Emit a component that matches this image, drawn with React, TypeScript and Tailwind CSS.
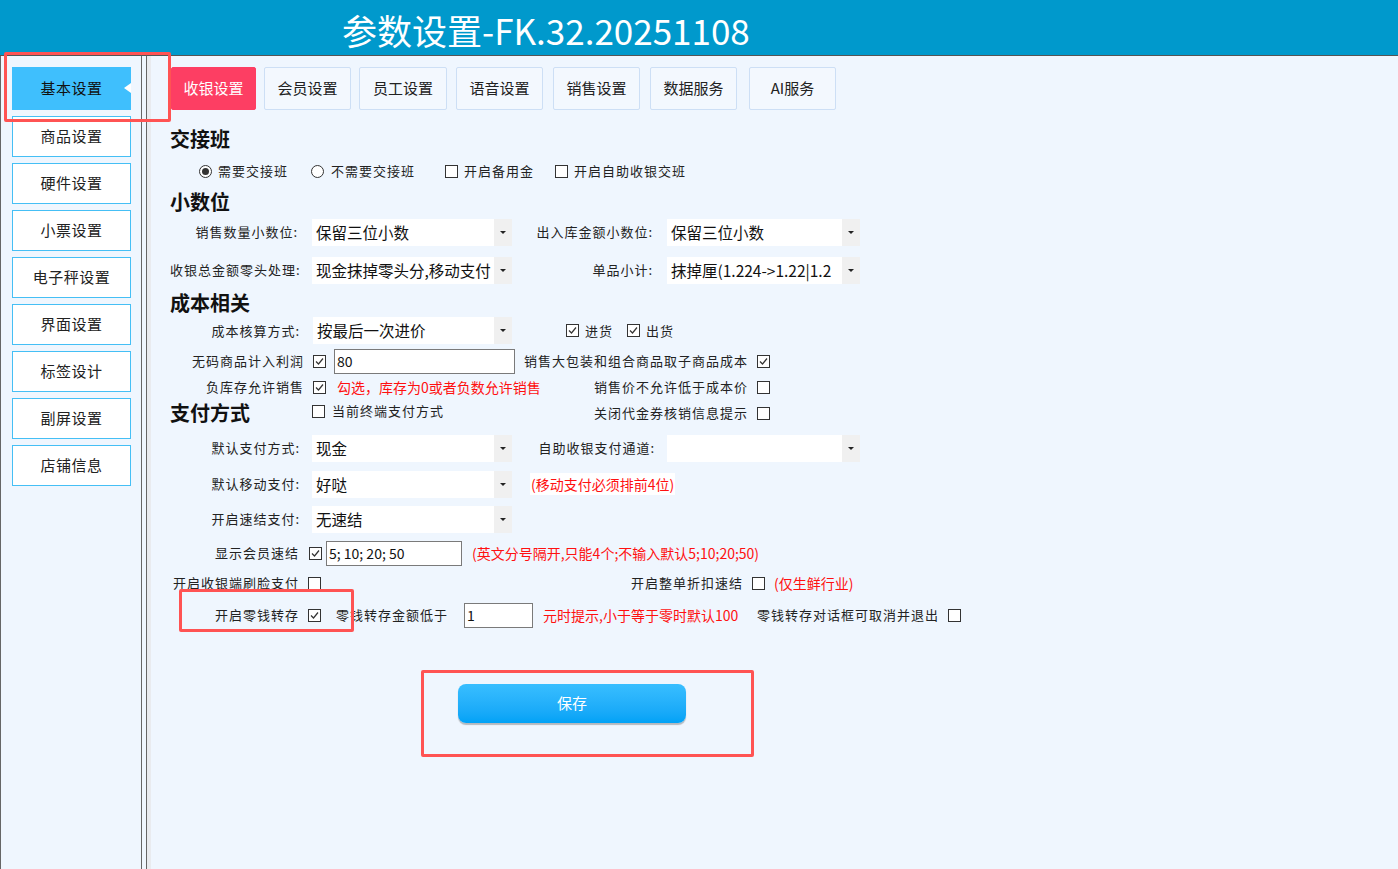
import React from "react";

function Check({ checked = false, className = "" }: { checked?: boolean; className?: string }) {
  return (
    <span
      className={`inline-flex h-[13px] w-[13px] shrink-0 items-center justify-center border border-[#333] bg-white ${className}`}
    >
      {checked && (
        <svg width="11" height="11" viewBox="0 0 11 11">
          <path d="M2 5.5 L4.5 8 L9 2.5" fill="none" stroke="#333" strokeWidth="1.2" />
        </svg>
      )}
    </span>
  );
}

function Radio({ checked = false }: { checked?: boolean }) {
  return (
    <span className="inline-flex h-[13px] w-[13px] shrink-0 items-center justify-center rounded-full border border-[#333] bg-white">
      {checked && <span className="h-[7px] w-[7px] rounded-full bg-[#333]" />}
    </span>
  );
}

function Select({ value = "", className = "" }: { value?: string; className?: string }) {
  return (
    <div className={`flex h-[27px] shrink-0 bg-white ${className}`}>
      <span className="flex-1 overflow-hidden whitespace-nowrap pl-[4px] text-[15.5px] leading-[27px] text-[#111]">
        {value}
      </span>
      <span className="flex w-[18px] items-center justify-center bg-[#f0f0f0]">
        <span className="h-0 w-0 border-x-[3px] border-t-[3px] border-x-transparent border-t-[#222]" />
      </span>
    </div>
  );
}

function TextBox({ value, className = "" }: { value: string; className?: string }) {
  return (
    <div
      className={`flex h-[25px] shrink-0 items-center border border-[#7a7a7a] bg-white pl-[2px] text-[14px] text-[#111] ${className}`}
    >
      {value}
    </div>
  );
}

const lbl = "text-[13px] tracking-[1px] text-[#222] whitespace-nowrap";
const red = "text-[14px] text-[#ff1010] whitespace-nowrap";
const heading = "text-[20px] font-bold text-[#111] whitespace-nowrap";

const sideItems = ["商品设置", "硬件设置", "小票设置", "电子秤设置", "界面设置", "标签设计", "副屏设置", "店铺信息"];

const tabs = [
  { name: "收银设置", cls: "w-[85px] bg-[#fd3e63] border-[#fd3e63] text-white" },
  { name: "会员设置", cls: "ml-[8px] w-[87px]" },
  { name: "员工设置", cls: "ml-[8px] w-[88px]" },
  { name: "语音设置", cls: "ml-[9px] w-[87px]" },
  { name: "销售设置", cls: "ml-[10px] w-[87px]" },
  { name: "数据服务", cls: "ml-[10px] w-[87px]" },
  { name: "AI服务", cls: "ml-[12px] w-[87px]" },
];

export default function App() {
  return (
    <div className="relative h-[869px] w-[1398px] overflow-hidden bg-[#eff6fe] font-['Noto_Sans_CJK_SC',sans-serif]">
      <header className="flex h-[56px] items-center border-b border-[#555] bg-[#0099cc] pl-[342px] pt-[4px]">
        <h1 className="text-[35px] leading-none text-white">参数设置-FK.32.20251108</h1>
      </header>

      <div className="flex h-[813px]">
        <aside className="flex w-[142px] flex-col gap-[6px] border-x border-[#666] pl-[11px] pt-[11px]">
          <div className="relative flex h-[43px] w-[119px] items-center justify-center bg-[#3fbffd] text-[15px] tracking-[0.5px] text-[#111]">
            基本设置
            <span className="absolute right-0 top-[16px] h-0 w-0 border-y-[5px] border-r-[7px] border-y-transparent border-r-white" />
          </div>
          {sideItems.map((s) => (
            <div
              key={s}
              className="flex h-[41px] w-[119px] items-center justify-center border border-[#45bff5] bg-white text-[15px] tracking-[0.5px] text-[#222]"
            >
              {s}
            </div>
          ))}
        </aside>
        <div className="w-[4px]" />
        <div className="w-[1px] bg-[#666]" />
        <div className="w-[4px] bg-[#e9ebef]" />

        <main className="flex-1 pl-[19px] pt-[11px]">
          <div className="ml-[1px] flex h-[43px]">
            {tabs.map((t) => (
              <div
                key={t.name}
                className={`flex items-center justify-center rounded-[2px] border border-[#cddff5] bg-[#f3f8fe] text-[15px] text-[#222] ${t.cls}`}
              >
                {t.name}
              </div>
            ))}
          </div>

          <div className="mt-[13px] flex h-[32px] items-center">
            <span className={heading}>交接班</span>
          </div>

          <div className="flex h-[32px] items-center">
            <div className="ml-[29px] flex w-[112px] items-center gap-[6px]">
              <Radio checked />
              <span className={lbl}>需要交接班</span>
            </div>
            <div className="flex w-[134px] items-center gap-[7px]">
              <Radio />
              <span className={lbl}>不需要交接班</span>
            </div>
            <div className="flex w-[110px] items-center gap-[6px]">
              <Check />
              <span className={lbl}>开启备用金</span>
            </div>
            <div className="flex items-center gap-[6px]">
              <Check />
              <span className={lbl}>开启自助收银交班</span>
            </div>
          </div>

          <div className="flex h-[30px] items-center">
            <span className={heading}>小数位</span>
          </div>

          <div className="flex h-[30px] items-center">
            <span className={`${lbl} w-[128px] text-right`}>销售数量小数位:</span>
            <Select className="ml-[14px] w-[200px]" value="保留三位小数" />
            <span className={`${lbl} w-[141px] text-right`}>出入库金额小数位:</span>
            <Select className="ml-[14px] w-[193px]" value="保留三位小数" />
          </div>

          <div className="flex h-[46px] items-center">
            <span className={`${lbl} w-[128px] text-right`}>收银总金额零头处理:</span>
            <Select className="ml-[14px] w-[200px]" value="现金抹掉零头分,移动支付" />
            <span className={`${lbl} w-[141px] text-right`}>单品小计:</span>
            <Select className="ml-[14px] w-[193px]" value="抹掉厘(1.224->1.22|1.2" />
          </div>

          <div className="flex h-[20px] items-center">
            <span className={heading}>成本相关</span>
          </div>

          <div className="flex h-[35px] items-center">
            <span className={`${lbl} w-[130px] text-right`}>成本核算方式:</span>
            <Select className="ml-[13px] w-[199px]" value="按最后一次进价" />
            <div className="ml-[54px] flex w-[61px] items-center gap-[6px]">
              <Check checked />
              <span className={lbl}>进货</span>
            </div>
            <div className="flex items-center gap-[6px]">
              <Check checked />
              <span className={lbl}>出货</span>
            </div>
          </div>

          <div className="flex h-[26px] items-center">
            <span className={`${lbl} w-[134px] text-right`}>无码商品计入利润</span>
            <Check checked className="ml-[9px]" />
            <TextBox value="80" className="ml-[8px] w-[181px]" />
            <span className={`${lbl} w-[233px] text-right`}>销售大包装和组合商品取子商品成本</span>
            <Check checked className="ml-[9px]" />
          </div>

          <div className="flex h-[26px] items-center">
            <span className={`${lbl} w-[134px] text-right`}>负库存允许销售</span>
            <Check checked className="ml-[9px]" />
            <span className={`${red} ml-[11px] w-[220px]`}>勾选，库存为0或者负数允许销售</span>
            <span className={`${lbl} w-[191px] text-right`}>销售价不允许低于成本价</span>
            <Check className="ml-[9px]" />
          </div>

          <div className="flex h-[26px] items-center">
            <span className={`${heading} w-[142px]`}>支付方式</span>
            <Check className="-mt-[4px]" />
            <span className={`${lbl} -mt-[4px] ml-[7px] w-[160px]`}>当前终端支付方式</span>
            <span className={`${lbl} w-[256px] text-right`}>关闭代金券核销信息提示</span>
            <Check className="ml-[9px]" />
          </div>

          <div className="flex h-[44px] items-center">
            <span className={`${lbl} w-[130px] text-right`}>默认支付方式:</span>
            <Select className="ml-[12px] w-[200px]" value="现金" />
            <span className={`${lbl} w-[143px] text-right`}>自助收银支付通道:</span>
            <Select className="ml-[12px] w-[193px]" />
          </div>

          <div className="flex h-[28px] items-center">
            <span className={`${lbl} w-[130px] text-right`}>默认移动支付:</span>
            <Select className="ml-[12px] w-[200px]" value="好哒" />
            <span className={`${red} ml-[18px] bg-white px-[1px] leading-[22px]`}>(移动支付必须排前4位)</span>
          </div>

          <div className="flex h-[42px] items-center">
            <span className={`${lbl} w-[130px] text-right`}>开启速结支付:</span>
            <Select className="ml-[12px] w-[200px]" value="无速结" />
          </div>

          <div className="flex h-[26px] items-center">
            <span className={`${lbl} w-[129px] text-right`}>显示会员速结</span>
            <Check checked className="ml-[10px]" />
            <TextBox value="5; 10; 20; 50" className="ml-[4px] w-[136px]" />
            <span className={`${red} ml-[10px]`}>(英文分号隔开,只能4个;不输入默认5;10;20;50)</span>
          </div>

          <div className="flex h-[34px] items-center">
            <span className={`${lbl} w-[129px] text-right`}>开启收银端刷脸支付</span>
            <Check className="ml-[9px]" />
            <span className={`${lbl} w-[422px] text-right`}>开启整单折扣速结</span>
            <Check className="ml-[9px]" />
            <span className={`${red} ml-[9px]`}>(仅生鲜行业)</span>
          </div>

          <div className="flex h-[30px] items-center">
            <span className={`${lbl} w-[129px] text-right`}>开启零钱转存</span>
            <Check checked className="ml-[9px]" />
            <span className={`${lbl} ml-[15px] w-[128px]`}>零钱转存金额低于</span>
            <TextBox value="1" className="w-[69px]" />
            <span className={`${red} ml-[10px] w-[214px]`}>元时提示,小于等于零时默认100</span>
            <span className={lbl}>零钱转存对话框可取消并退出</span>
            <Check className="ml-[9px]" />
          </div>

          <div className="ml-[288px] mt-[54px] flex h-[39px] w-[228px] items-center justify-center rounded-[8px] bg-gradient-to-b from-[#38beff] to-[#00a2f6] text-[15px] text-white shadow-[0_2px_1px_rgba(0,0,0,0.25)]">
            保存
          </div>
        </main>
      </div>

      <div className="pointer-events-none absolute left-[4px] top-[52px] h-[70px] w-[167px] rounded-[2px] border-[3px] border-[#ff5353]" />
      <div className="pointer-events-none absolute left-[179px] top-[589px] h-[43px] w-[175px] rounded-[2px] border-[3px] border-[#ff5353]" />
      <div className="pointer-events-none absolute left-[421px] top-[670px] h-[87px] w-[333px] rounded-[2px] border-[3px] border-[#ff5353]" />
    </div>
  );
}
